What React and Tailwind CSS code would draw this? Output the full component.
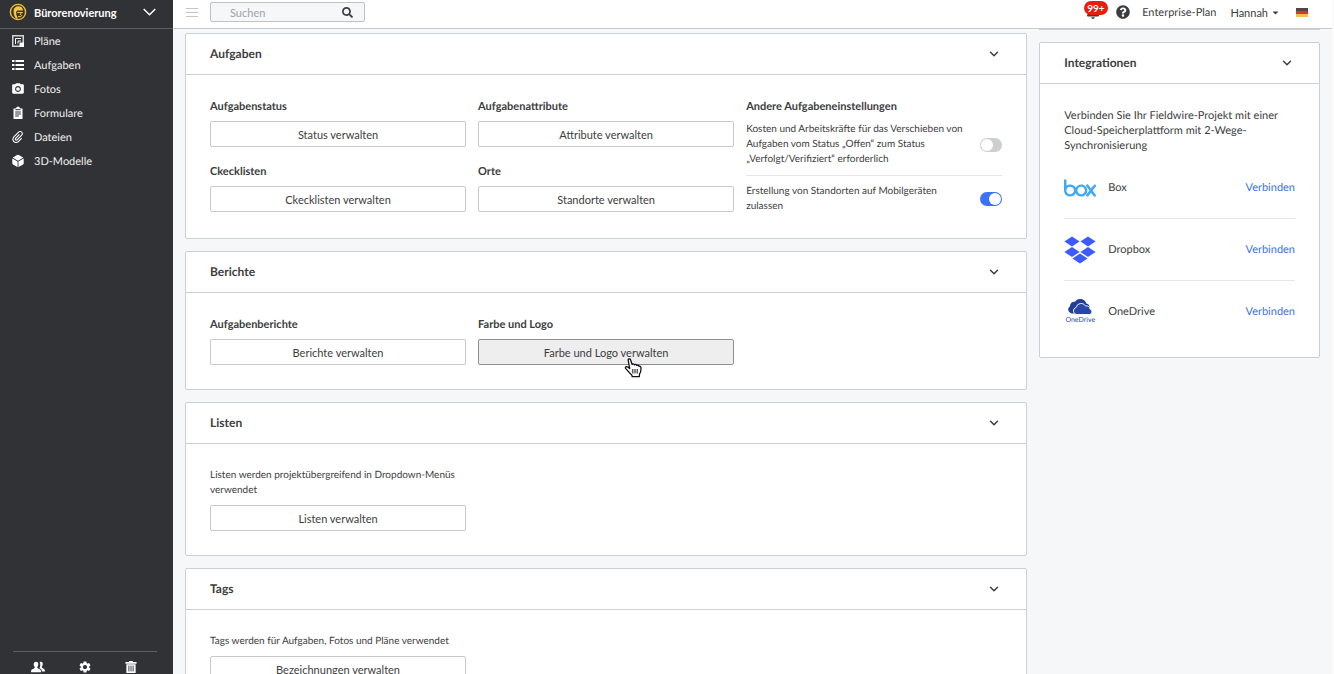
import React from 'react';
import { FaSearch, FaCaretDown, FaQuestionCircle, FaBell } from 'react-icons/fa';
import { FiChevronDown } from 'react-icons/fi';
import { MdPhotoCamera, MdSettings } from 'react-icons/md';
import { ImAttachment } from 'react-icons/im';
import { IoCube } from 'react-icons/io5';
import { SiBox } from 'react-icons/si';

const PlanIcon = () => (
  <svg viewBox="0 0 12 12" className="w-3 h-3" fill="none">
    <path d="M.75.75h10.5v10.5H.75z" stroke="#d4d4d4" strokeWidth="1.5" />
    <path d="M3.5 9V3.500H9" stroke="#fff" />
    <path d="M6 8.500V6h3" stroke="#fff" />
    <path d="M7.500 7.500H12V12H7.500z" fill="#fff" />
  </svg>
);

const ListIcon = () => (
  <svg viewBox="0 0 12 10" className="w-3 h-2.5" fill="#fff">
    <path d="M0 0h2.500v2H0zM0 4h2.500v2H0zM0 8h2.500v2H0zM3.500 0H12v2H3.500zM3.500 4H12v2H3.500zM3.500 8H12v2H3.500z" />
  </svg>
);

const ClipboardIcon = () => (
  <svg viewBox="0 0 12 14" className="w-3 h-3.5">
    <path fill="#fff" d="M1.5 2.5h2L4.7 1.2a1.8 1.8 0 0 1 2.6 0l1.2 1.3h2V13h-9z" />
    <path stroke="#313235" d="M3.5 3.7h5M3.2 6h5.6M3.2 8h5.6M3.2 10h3.6" />
  </svg>
);

const PeopleIcon = () => (
  <svg viewBox="0 0 14 12" className="w-3.5 h-3" fill="#fff">
    <path d="M8.600 1.300C9 .9 9.400.8 9.900.8c1.400 0 2 1 1.800 2.600-.1 1-.4 1.600-.9 2.100v.8c.3 1 2.900 1.200 3.100 3.200l.1 1H11c-.2-2-1.100-2.700-2.500-3.300.8-1.500 1.300-4 .1-5.900z" />
    <path d="M5 .8c1.700 0 2.500 1.100 2.300 2.900-.1 1-.5 1.700-1 2.200v.8c.4 1 3.500 1.300 3.700 3.200l.1 1.300H0l.1-1.300c.2-1.900 3.200-2.200 3.600-3.200v-.8c-.5-.5-.9-1.200-1-2.200C2.500 1.900 3.300.8 5 .8z" />
  </svg>
);

const TrashIcon = () => (
  <svg viewBox="0 0 12 13" className="w-3 h-3">
    <path fill="#fff" d="M4 0h4v1.200h4v1.800H0V1.200h4zM1 3.500h10V13H1z" />
    <path stroke="#313235" d="M3.700 5v6.300M6 5v6.300M8.300 5v6.300" />
  </svg>
);

const ProjectLogo = () => (
  <svg viewBox="0 0 18 18" className="w-[18px] h-[18px]">
    <circle cx="9" cy="9" r="7.600" fill="#3a3325" stroke="#f2bd45" strokeWidth="1.400" />
    <path fill="#f5c44c" d="M4.600 7.800C4.800 5 6.500 3.300 9.300 3.300c2.600 0 4.500 1.500 4.800 4.200H8L7 9.500l.6 3 1.200 3.200H7.400C5.500 14 4.400 11 4.600 7.800z" />
    <path fill="none" stroke="#f5c44c" d="M8.200 9.500h5.600M11.800 9.500v2.200h-1M8.800 13.600h3l1.200-1.400" />
  </svg>
);

const DropboxLogo = () => (
  <svg viewBox="0 0 32 28" className="w-8 h-7" fill="#3d5afe">
    <path d="M8 .5l7.600 5-7.600 5-7.600-5zM24 .5l7.600 5-7.600 5-7.600-5zM8 11l7.600 5L8 21 .4 16zM24 11l7.600 5-7.600 5-7.600-5zM16 17.500l7.600 5-7.600 5-7.600-5z" />
  </svg>
);

const OneDriveLogo = () => (
  <span className="w-8 flex flex-col items-center">
    <svg viewBox="0 0 26 16" className="w-[26px] h-4">
      <path fill="#213f9a" d="M4.500 14.500A4 4 0 0 1 3 7.200a4.200 4.200 0 0 1 5-4.400A6.300 6.300 0 0 1 19.300 4.500c2 .3 3 1.500 3.200 3.500L14 14.500z" />
      <path fill="#2947ab" stroke="#fff" strokeWidth=".9" d="M9.800 15.500a3.600 3.600 0 0 1-.6-7.100 5 5 0 0 1 9.300-1.400 4 4 0 0 1 4.600 3.100 2.800 2.800 0 0 1-.4 5.400z" />
    </svg>
    <span className="text-[7px] leading-[10px] text-[#2b4fa8]">OneDrive</span>
  </span>
);

const HandCursor = () => (
  <svg viewBox="0 0 18 20" className="absolute left-[145px] top-[18px] w-[18px] h-5 pointer-events-none">
    <path
      fill="#fff"
      stroke="#111"
      strokeWidth="1.300"
      strokeLinejoin="round"
      d="M4.200 2.300c-.3-1.500 1.800-2 2.300-.5l1.600 4.700c.3-1 2-.9 2.300.3.500-.8 2-.6 2.300.6.700-.6 2-.2 2.300.9.800-.3 1.700.2 1.900 1.200.3 2.600.2 4.500-1.400 6.500l-.2 2.700H8.300l-.6-1.700c-2-1.500-4-4.300-5.900-6.400-1-1.500.6-2.600 1.900-1.600l2 1.600z"
    />
    <path stroke="#111" d="M8.800 11v4.500M11 11v4.500M13.200 11v4.500" />
  </svg>
);

const menuItems = [
  { icon: <PlanIcon />, name: 'Pläne' },
  { icon: <ListIcon />, name: 'Aufgaben' },
  { icon: <MdPhotoCamera className="text-sm" />, name: 'Fotos' },
  { icon: <ClipboardIcon />, name: 'Formulare' },
  { icon: <ImAttachment className="text-xs" />, name: 'Dateien' },
  { icon: <IoCube className="text-sm" />, name: '3D-Modelle' },
];

const integrations = [
  { logo: <SiBox className="text-[32px] text-[#3fa9f5]" />, name: 'Box' },
  { logo: <DropboxLogo />, name: 'Dropbox' },
  { logo: <OneDriveLogo />, name: 'OneDrive' },
];

const Sidebar = () => (
  <aside className="w-[173px] shrink-0 h-screen flex flex-col bg-[#313235] text-white">
    <button className="h-[29px] shrink-0 flex items-center pl-[9px] pr-[17px] pb-1 border-b border-[#5d5e60]">
      <ProjectLogo />
      <span className="ml-[7px] font-bold">Bürorenovierung</span>
      <svg viewBox="0 0 13 8" className="ml-auto w-[13px] h-2" fill="none" stroke="#fff" strokeWidth="1.400">
        <path d="M.7.9l5.800 5.900L12.300.9" />
      </svg>
    </button>
    <nav className="flex-1 flex flex-col">
      {menuItems.map((item) => (
        <a key={item.name} href="#" className="h-6 flex items-center pl-[11px]">
          <span className="w-3.5 flex justify-center">{item.icon}</span>
          <span className="ml-[9px] text-[#f0f0f0]">{item.name}</span>
        </a>
      ))}
    </nav>
    <div className="h-[23px] shrink-0 ml-[13px] mr-4 pl-[18px] pr-5 pt-2 flex justify-between border-t border-[#5d5e60]">
      <button aria-label="Personen" className="h-3.5"><PeopleIcon /></button>
      <button aria-label="Einstellungen" className="h-3.5"><MdSettings className="text-sm" /></button>
      <button aria-label="Papierkorb" className="h-3.5"><TrashIcon /></button>
    </div>
  </aside>
);

const Header = () => (
  <header className="h-[29px] shrink-0 flex items-center pb-1 pl-[13px] pr-6 bg-white border-b border-[#c9cacb]">
    <button aria-label="Menü" className="w-3 flex flex-col gap-[3px]">
      <span className="h-px w-full bg-[#c4c4c4]" />
      <span className="h-px w-full bg-[#c4c4c4]" />
      <span className="h-px w-full bg-[#c4c4c4]" />
    </button>
    <form className="ml-3 w-[155px] h-5 flex items-center rounded-xs border border-[#bfc1c3] bg-[#f5f7f9]">
      <input
        type="text"
        aria-label="Suchen"
        placeholder="Suchen"
        className="flex-1 min-w-0 pl-[19px] outline-none placeholder:text-[#a0a2a5]"
      />
      <button type="button" aria-label="Suche starten" className="mr-[11px]"><FaSearch /></button>
    </form>
    <div className="ml-auto flex items-center">
      <button aria-label="Benachrichtigungen" className="relative mr-4">
        <FaBell className="text-sm" />
        <span className="absolute -left-0.5 -top-1 h-3.5 px-[3px] rounded-full bg-[#ea1c0d] text-white font-bold text-[10px] leading-[14px]">
          99+
        </span>
      </button>
      <button aria-label="Hilfe" className="mr-3"><FaQuestionCircle className="text-sm" /></button>
      <a href="#" className="mr-3.5">Enterprise-Plan</a>
      <button className="mr-4 flex items-center gap-[3px]">
        Hannah <FaCaretDown className="text-[9px]" />
      </button>
      <button aria-label="Sprache: Deutsch" className="w-3 h-[9px] flex flex-col">
        <span className="h-[3px] w-full bg-[#4f4745]" />
        <span className="h-[3px] w-full bg-[#cf3b2c]" />
        <span className="h-[3px] w-full bg-[#f2c04d]" />
      </button>
    </div>
  </header>
);

const Card = ({ title, children }) => (
  <section className="rounded-xs border border-[#cdd0d2] bg-white">
    <div className="h-[41px] flex items-center justify-between pl-6 pr-[25px] border-b border-[#cdd0d2]">
      <h2 className="text-xs leading-4 font-bold">{title}</h2>
      <button aria-label={`${title} einklappen`}><FiChevronDown className="text-sm" strokeWidth={2.5} /></button>
    </div>
    {children}
  </section>
);

const ManageButton = ({ hovered, children }) => (
  <button
    className={`relative block w-full h-[26px] rounded-xs border ${
      hovered ? 'bg-[#eeeeee] border-[#8e8f91]' : 'bg-white border-[#c6c8ca]'
    }`}
  >
    {children}
  </button>
);

const Setting = ({ label, button, hovered }) => (
  <div className="flex flex-col gap-[7px]">
    <h3 className="font-bold">{label}</h3>
    <ManageButton hovered={hovered}>
      {button}
      {hovered && <HandCursor />}
    </ManageButton>
  </div>
);

const Toggle = ({ label, defaultChecked }) => (
  <label className="flex items-center justify-between gap-3 text-[10px]">
    <span>{label}</span>
    <input
      type="checkbox"
      role="switch"
      defaultChecked={defaultChecked}
      className="appearance-none shrink-0 w-[22px] h-3.5 p-px flex rounded-full bg-[#cdcecf] checked:bg-[#3b72f6] checked:justify-end before:w-3 before:h-3 before:rounded-full before:bg-white"
    />
  </label>
);

const App = () => {
  return (
    <div className="flex h-screen overflow-hidden bg-[#f5f7f9] font-[Lato,sans-serif] text-[11px] leading-[15px] text-[#3c3d40] [text-rendering:geometricPrecision]">
      <Sidebar />
      <div className="flex-1 min-w-0 flex flex-col border-r-2 border-[#fbfbfb]">
        <Header />
        <main className="flex-1 min-h-0 overflow-hidden grid grid-cols-[3fr_1fr] items-start gap-3 px-3">
          <div className="flex flex-col gap-3 pt-1">
            <Card title="Aufgaben">
              <div className="grid grid-cols-3 gap-3 p-6">
                <div className="flex flex-col gap-[17px]">
                  <Setting label="Aufgabenstatus" button="Status verwalten" />
                  <Setting label="Ckecklisten" button="Ckecklisten verwalten" />
                </div>
                <div className="flex flex-col gap-[17px]">
                  <Setting label="Aufgabenattribute" button="Attribute verwalten" />
                  <Setting label="Orte" button="Standorte verwalten" />
                </div>
                <div>
                  <h3 className="font-bold mb-2">Andere Aufgabeneinstellungen</h3>
                  <div className="pb-2 mb-2 border-b border-[#e6e7e8]">
                    <Toggle label="Kosten und Arbeitskräfte für das Verschieben von Aufgaben vom Status „Offen“ zum Status „Verfolgt/Verifiziert“ erforderlich" />
                  </div>
                  <Toggle label="Erstellung von Standorten auf Mobilgeräten zulassen" defaultChecked />
                </div>
              </div>
            </Card>

            <Card title="Berichte">
              <div className="grid grid-cols-3 gap-3 p-6">
                <Setting label="Aufgabenberichte" button="Berichte verwalten" />
                <Setting label="Farbe und Logo" button="Farbe und Logo verwalten" hovered />
              </div>
            </Card>

            <Card title="Listen">
              <div className="grid grid-cols-3 gap-3 p-6">
                <div className="flex flex-col gap-[7px]">
                  <p className="text-[10px]">Listen werden projektübergreifend in Dropdown-Menüs verwendet</p>
                  <ManageButton>Listen verwalten</ManageButton>
                </div>
              </div>
            </Card>

            <Card title="Tags">
              <div className="grid grid-cols-3 gap-3 p-6">
                <div className="flex flex-col gap-[7px]">
                  <p className="text-[10px]">Tags werden für Aufgaben, Fotos und Pläne verwendet</p>
                  <ManageButton>Bezeichnungen verwalten</ManageButton>
                </div>
              </div>
            </Card>
          </div>

          <div className="flex flex-col gap-3">
            <div className="h-px bg-[#cdd0d2]" />
            <Card title="Integrationen">
              <div className="px-6 pt-6 pb-[15px]">
                <p className="mb-1">
                  Verbinden Sie Ihr Fieldwire-Projekt mit einer Cloud-Speicherplattform mit 2-Wege-Synchronisierung
                </p>
                <ul className="divide-y divide-[#e6e7e8]">
                  {integrations.map((item) => (
                    <li key={item.name} className="h-[62px] last:h-[61px] flex items-center gap-3">
                      {item.logo}
                      <span>{item.name}</span>
                      <a href="#" className="ml-auto text-[#3a74e0]">Verbinden</a>
                    </li>
                  ))}
                </ul>
              </div>
            </Card>
          </div>
        </main>
      </div>
    </div>
  );
};

export default App;
